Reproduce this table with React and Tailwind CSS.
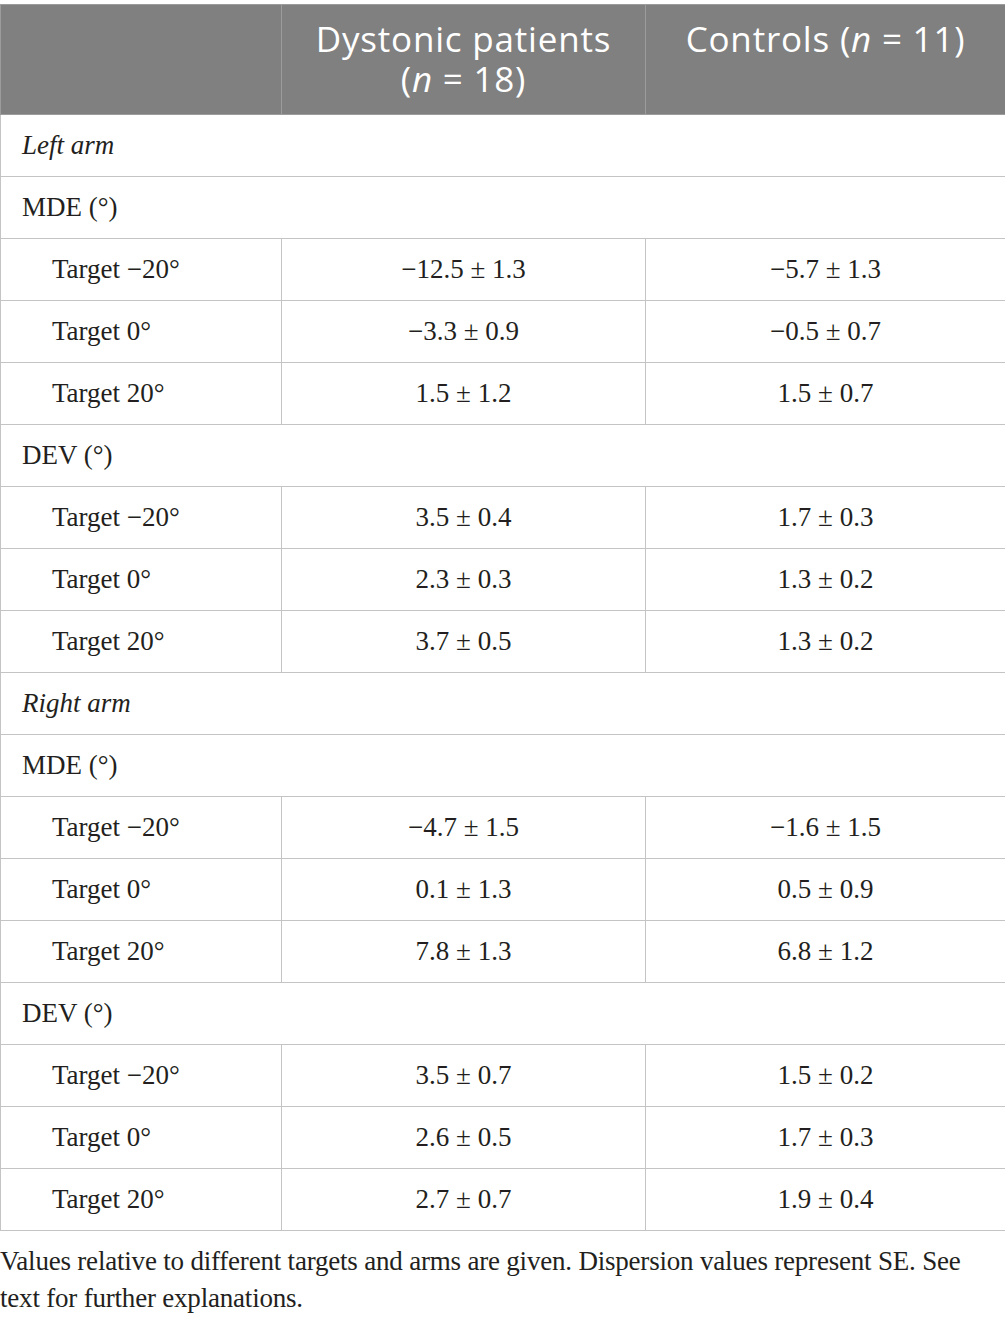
const sections = [
  {
    arm: "Left arm",
    groups: [
      {
        name: "MDE (°)",
        rows: [
          ["Target −20°", "−12.5 ± 1.3", "−5.7 ± 1.3"],
          ["Target 0°", "−3.3 ± 0.9", "−0.5 ± 0.7"],
          ["Target 20°", "1.5 ± 1.2", "1.5 ± 0.7"],
        ],
      },
      {
        name: "DEV (°)",
        rows: [
          ["Target −20°", "3.5 ± 0.4", "1.7 ± 0.3"],
          ["Target 0°", "2.3 ± 0.3", "1.3 ± 0.2"],
          ["Target 20°", "3.7 ± 0.5", "1.3 ± 0.2"],
        ],
      },
    ],
  },
  {
    arm: "Right arm",
    groups: [
      {
        name: "MDE (°)",
        rows: [
          ["Target −20°", "−4.7 ± 1.5", "−1.6 ± 1.5"],
          ["Target 0°", "0.1 ± 1.3", "0.5 ± 0.9"],
          ["Target 20°", "7.8 ± 1.3", "6.8 ± 1.2"],
        ],
      },
      {
        name: "DEV (°)",
        rows: [
          ["Target −20°", "3.5 ± 0.7", "1.5 ± 0.2"],
          ["Target 0°", "2.6 ± 0.5", "1.7 ± 0.3"],
          ["Target 20°", "2.7 ± 0.7", "1.9 ± 0.4"],
        ],
      },
    ],
  },
];

const serif = "font-['Liberation_Serif',serif]";
const cell = "border border-[#c4c4c4] h-[62px] p-0";

export default function App() {
  return (
    <div className={`bg-white w-[1005px] min-h-[1320px] pt-[4px] text-[#231f20] ${serif}`}>
      <table className="w-[1005px] border-collapse table-fixed">
        <colgroup>
          <col className="w-[281px]" />
          <col className="w-[364px]" />
          <col className="w-[360px]" />
        </colgroup>
        <thead>
          <tr className="bg-[#7f807f] text-white font-['Open_Sans',sans-serif] text-[35px] leading-[40px] tracking-[0.8px]">
            <th className="border border-[#9c9c9c] h-[110px] p-0"></th>
            <th className="border border-[#9c9c9c] h-[110px] p-0 align-top pt-[14px] font-normal">
              Dystonic patients
              <br />
              (<i>n</i> = 18)
            </th>
            <th className="border border-[#9c9c9c] h-[110px] p-0 align-top pt-[14px] font-normal">
              Controls (<i>n</i> = 11)
            </th>
          </tr>
        </thead>
        <tbody className="text-[27px]">
          {sections.map((s) => (
            <>
              <tr key={s.arm}>
                <td colSpan={3} className={`${cell} pl-[21px] italic`}>
                  {s.arm}
                </td>
              </tr>
              {s.groups.map((g) => (
                <>
                  <tr key={s.arm + g.name}>
                    <td colSpan={3} className={`${cell} pl-[21px]`}>
                      {g.name}
                    </td>
                  </tr>
                  {g.rows.map((r) => (
                    <tr key={s.arm + g.name + r[0]}>
                      <td className={`${cell} pl-[51px]`}>{r[0]}</td>
                      <td className={`${cell} text-center`}>{r[1]}</td>
                      <td className={`${cell} text-center`}>{r[2]}</td>
                    </tr>
                  ))}
                </>
              ))}
            </>
          ))}
        </tbody>
      </table>
      <p className="text-[27px] leading-[37px] mt-[12px] tracking-[-0.2px]">
        Values relative to different targets and arms are given. Dispersion values represent SE. See text for further
        explanations.
      </p>
    </div>
  );
}
